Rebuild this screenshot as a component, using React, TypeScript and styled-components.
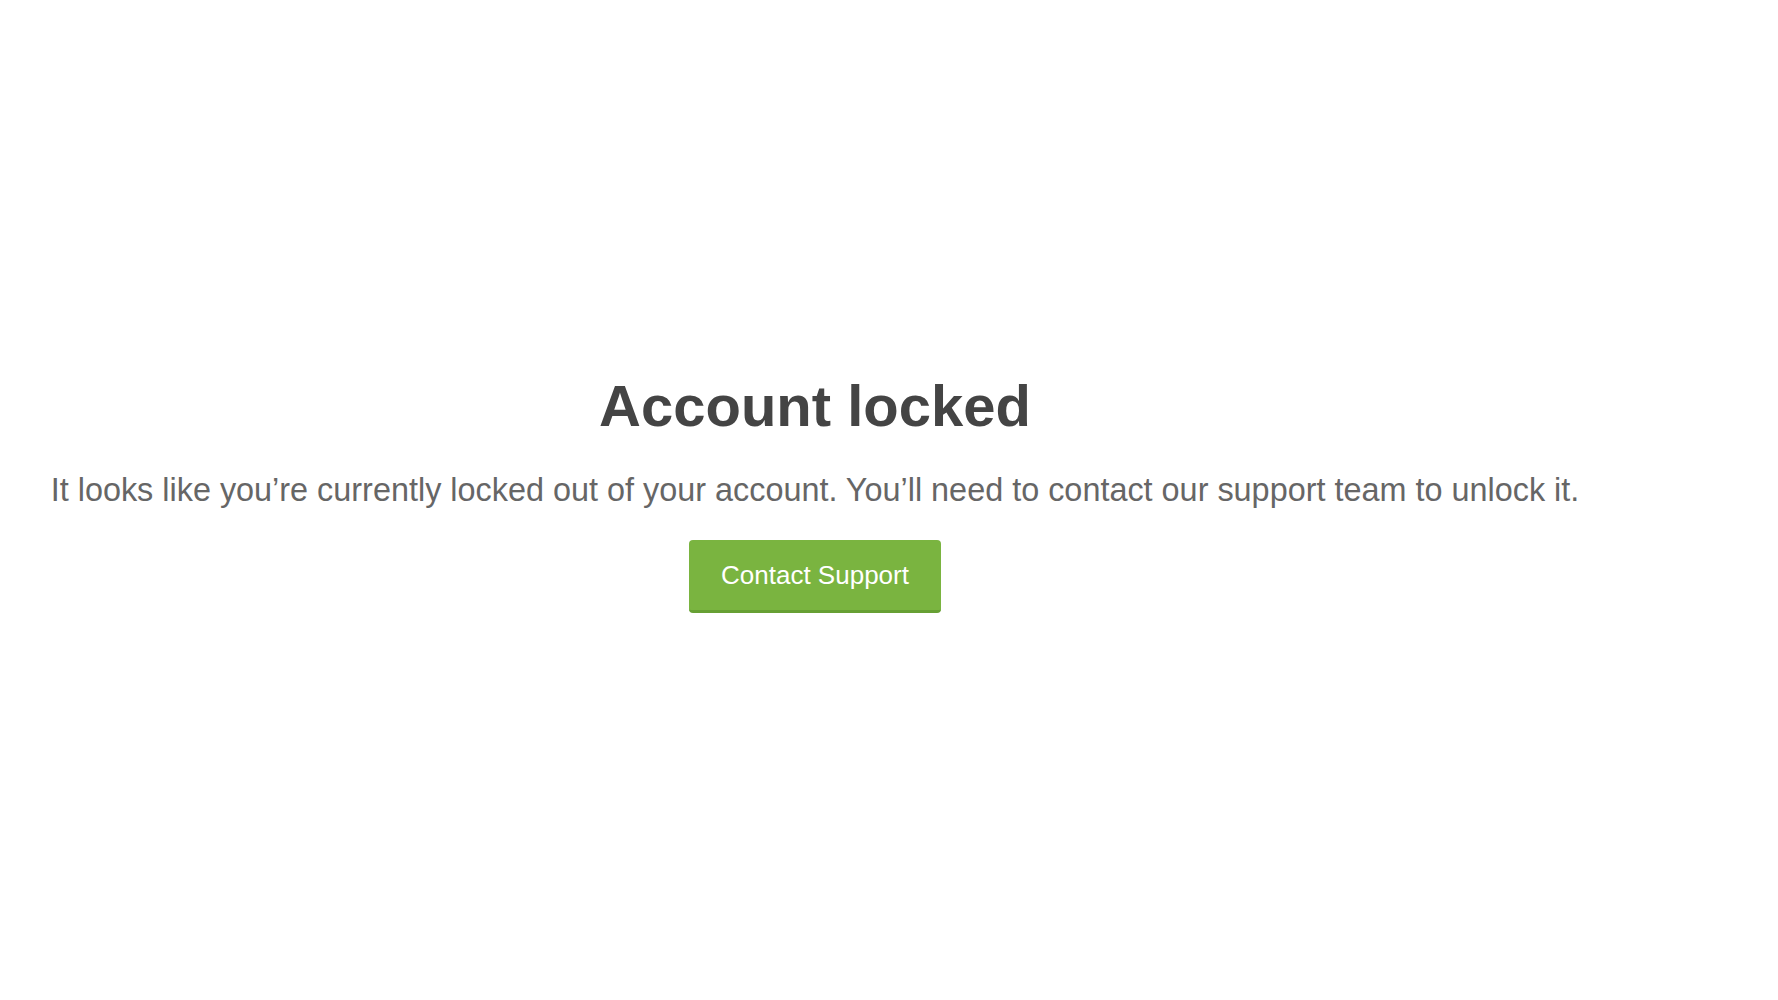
import styled, { createGlobalStyle } from 'styled-components';

const GlobalStyle = createGlobalStyle`
  html, body {
    margin: 0;
    padding: 0;
    background: #ffffff;
  }
  body {
    font-family: "Liberation Sans", Arial, sans-serif;
  }
`;

const Page = styled.main`
  min-height: 100vh;
  box-sizing: border-box;
  display: flex;
  align-items: center;
  padding: 0 148px 16px 0;
`;

const Content = styled.section`
  flex: 1;
  display: flex;
  flex-direction: column;
  align-items: center;
  text-align: center;
`;

const Title = styled.h1`
  margin: 0;
  font-size: 58px;
  line-height: 1.2;
  font-weight: 700;
  color: #444444;
`;

const Message = styled.p`
  margin: 29px 0 0;
  font-size: 32.4px;
  line-height: 1.3;
  color: #666666;
  white-space: nowrap;
`;

const SupportButton = styled.button`
  margin-top: 29px;
  width: 252px;
  height: 73px;
  border: none;
  border-bottom: 3px solid #67a034;
  border-radius: 4px;
  background: #7ab440;
  color: #ffffff;
  font-family: inherit;
  font-size: 26px;
  cursor: pointer;
`;

export default function App() {
  return (
    <>
      <GlobalStyle />
      <Page>
        <Content>
          <Title>Account locked</Title>
          <Message>
            It looks like you’re currently locked out of your account. You’ll need to contact our
            support team to unlock it.
          </Message>
          <SupportButton>Contact Support</SupportButton>
        </Content>
      </Page>
    </>
  );
}
